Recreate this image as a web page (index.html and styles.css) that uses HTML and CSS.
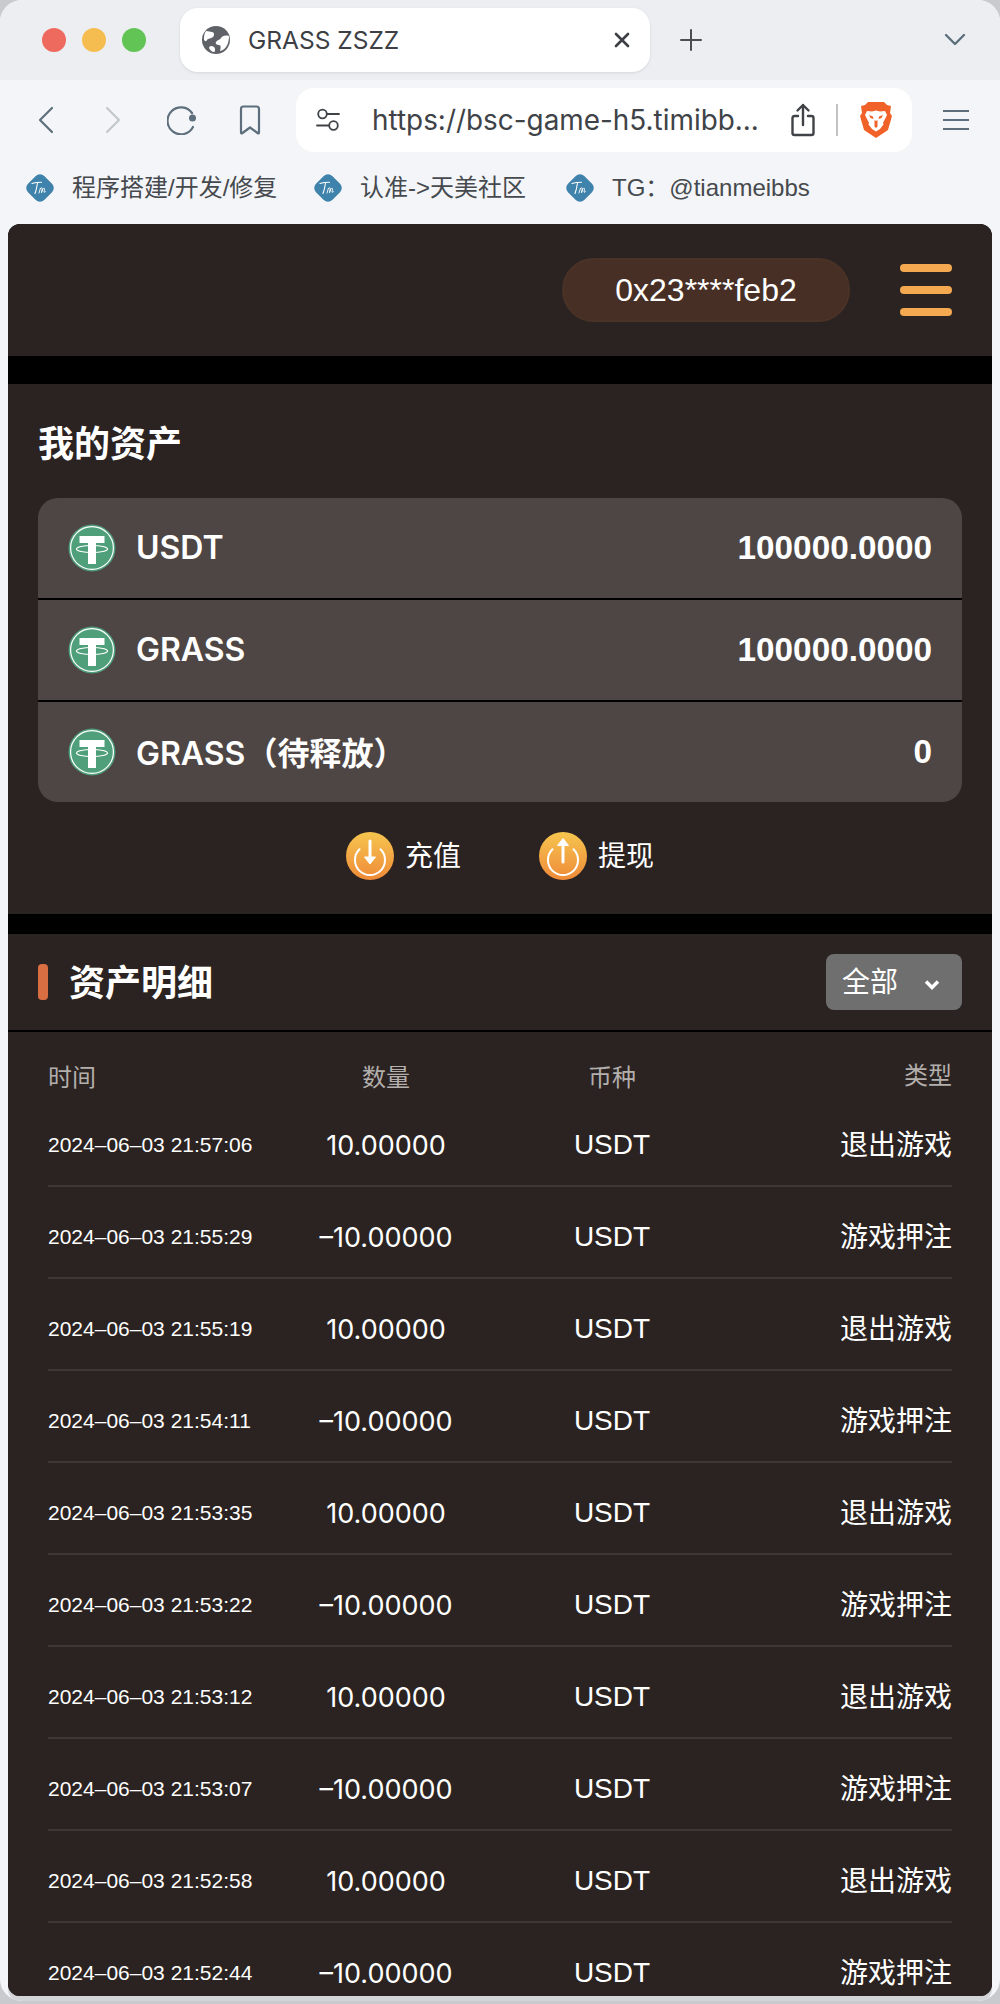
FILE: index.html
```html
<!DOCTYPE html>
<html lang="en">
<head>
    <meta charset="UTF-8">
    <meta name="viewport" content="width=device-width, initial-scale=1.0">
    <title>GRASS ZSZZ</title>
    <link rel="stylesheet" href="styles.css">
</head>
<body>

    <svg class="defs" width="0" height="0">
        <defs>
            <linearGradient id="coin" x1="0" y1="0" x2="0" y2="1">
                <stop offset="0" stop-color="#f6c54f"/>
                <stop offset="1" stop-color="#ef8a38"/>
            </linearGradient>
            <symbol id="tether" viewBox="0 0 48 48">
                <circle cx="24" cy="24" r="23.5" fill="#4f9f7b"/>
                <circle cx="24" cy="24" r="21.4" fill="none" stroke="#fff" stroke-width="1.2"/>
                <path d="M11.5 12h25v7H28v21h-8V19h-8.500z" fill="#fff"/>
                <ellipse cx="24" cy="25" rx="15.5" ry="3.5" fill="none" stroke="#fff" stroke-width="1.2"/>
            </symbol>
            <symbol id="tm" viewBox="0 0 30 30">
                <rect x="3.500" y="3.500" width="23" height="23" rx="6" fill="#3f82ab" transform="rotate(45 15 15)"/>
                <path d="M7 10.500c3-1 6-1.200 9.500-1.200M12.500 10c-.5 3.500-1.200 7-2.500 10.500" fill="none" stroke="#fff" stroke-width="1.1" stroke-linecap="round"/>
                <path d="M14 20l1.500-5 0 .5c1-1 2-1 1.800.3l-.8 4 1.300-3.800c1-1 2-1 1.800.3l-.6 2.700c.2.800 1 .3 1.600-.5" fill="none" stroke="#fff" stroke-width=".9" stroke-linecap="round"/>
            </symbol>
        </defs>
    </svg>

    <div class="window">
        <div class="tabstrip">
            <div class="lights">
                <span class="light red"></span>
                <span class="light yellow"></span>
                <span class="light green"></span>
            </div>
            <div class="tab">
                <svg class="globe" width="28" height="28" viewBox="0 0 28 28">
                    <circle cx="14" cy="14" r="14" fill="#5f6368"/>
                    <path d="M4 5c3 0 4 1 6 1s3 3 1 5-5 1-6 3-2 1-3 0c0-4 0-6 2-9zM27 10c-4-1-7 0-8 2s-4 2-5 4 1 3 3 3 2 3 1 6c5-1 9-6 9-15zM9 20c2 0 4 1 4 3s0 3-1 3c-2 0-4-2-5-4 0-1 1-2 2-2z" fill="#fff"/>
                </svg>
                <span class="tab-title">GRASS ZSZZ</span>
                <svg class="tab-close" width="16" height="16" viewBox="0 0 16 16">
                    <path d="M2 2l12 12M14 2L2 14" stroke="#3c4044" stroke-width="2.6" stroke-linecap="round"/>
                </svg>
            </div>
            <svg class="new-tab" width="22" height="22" viewBox="0 0 22 22">
                <path d="M11 1v20M1 11h20" stroke="#4a4e52" stroke-width="2" stroke-linecap="round"/>
            </svg>
            <svg class="tab-list" width="22" height="14" viewBox="0 0 22 14">
                <path d="M2 2l9 9 9-9" fill="none" stroke="#5d6f7c" stroke-width="2.4" stroke-linecap="round" stroke-linejoin="round"/>
            </svg>
        </div>

        <div class="toolbar">
            <div class="nav-icons">
                <svg class="nav-back" width="16" height="28" viewBox="0 0 16 28"><path d="M14 2L2 14l12 12" fill="none" stroke="#5d6f7c" stroke-width="2.2" stroke-linecap="round" stroke-linejoin="round"/></svg>
                <svg class="nav-forward" width="16" height="28" viewBox="0 0 16 28"><path d="M2 2l12 12L2 26" fill="none" stroke="#c2c8cc" stroke-width="2.2" stroke-linecap="round" stroke-linejoin="round"/></svg>
                <svg class="nav-reload" width="30" height="30" viewBox="0 0 30 30"><path d="M25 8A13.500 13.500 0 1 0 26 22" fill="none" stroke="#5d6f7c" stroke-width="2.2" stroke-linecap="round"/><circle cx="25.500" cy="13" r="3.500" fill="#5d6f7c"/></svg>
                <svg class="nav-mark" width="22" height="30" viewBox="0 0 22 30"><path d="M2 4q0-2.500 2.500-2.500h13Q20 1.500 20 4v23.500q0 1.500-1.500.5L11 22.500 3.500 28Q2 29 2 27.500z" fill="none" stroke="#5d6f7c" stroke-width="2.2" stroke-linejoin="round"/></svg>
            </div>
            <div class="address">
                <svg width="24" height="24" viewBox="0 0 24 24"><circle cx="6.500" cy="6" r="4.300" fill="none" stroke="#3f4347" stroke-width="1.8"/><path d="M11 6h12M1 17.500h12" stroke="#3f4347" stroke-width="1.8" stroke-linecap="round"/><circle cx="17.500" cy="17.500" r="4.300" fill="none" stroke="#3f4347" stroke-width="1.8"/></svg>
                <span class="url">https://bsc-game-h5.timibb...</span>
                <svg class="share" width="24" height="34" viewBox="0 0 24 34"><path d="M7 13H3.500Q1.500 13 1.500 15v15q0 2 2 2h17q2 0 2-2V15q0-2-2-2H17M12 22V2M6.500 7.500L12 2l5.500 5.500" fill="none" stroke="#3f4347" stroke-width="2.4" stroke-linecap="round" stroke-linejoin="round"/></svg>
                <span class="address-sep"></span>
                <svg class="brave" width="32" height="36" viewBox="0 0 32 36">
                    <path d="M8 0h16l3 3 4 1-1 7 2 3-4 14-9 6-3 2-3-2-9-6-4-14 2-3-1-7 4-1z" fill="#f0622a"/>
                    <path d="M7 9l5 .5 4-1 4 1 5-.5 2 4-4 8 .5 1.500L20 27l-4 2.500L12 27l-3.500-4.500L9 21l-4-8z" fill="#fff"/>
                    <path d="M14.500 18l1.500 1 1.500-1v6.500L16 26l-1.500-1.500zM9 13l4 1.500.5 2.500-3-1zM23 13l-4 1.500-.5 2.500 3-1z" fill="#f0622a"/>
                </svg>
            </div>
            <svg class="browser-menu" width="26" height="22" viewBox="0 0 26 22"><path d="M0 2h26M0 11h26M0 20h26" stroke="#5d6f7c" stroke-width="2"/></svg>
        </div>

        <div class="bookmarks">
            <div class="bookmark bm-first"><svg width="30" height="30"><use href="#tm"/></svg><span>程序搭建/开发/修复</span></div>
            <div class="bookmark bm-second"><svg width="30" height="30"><use href="#tm"/></svg><span>认准-&gt;天美社区</span></div>
            <div class="bookmark"><svg width="30" height="30"><use href="#tm"/></svg><span>TG：@tianmeibbs</span></div>
        </div>

        <div class="page">
            <div class="topbar">
                <div class="wallet">0x23****feb2</div>
                <div class="menu-btn"><i></i><i></i><i></i></div>
            </div>

            <div class="assets">
                <h2 class="assets-title">我的资产</h2>
                <div class="asset-card">
                    <div class="asset-row">
                        <svg class="coin" width="48" height="48"><use href="#tether"/></svg>
                        <span class="asset-name">USDT</span>
                        <span class="asset-value">100000.0000</span>
                    </div>
                    <div class="asset-row">
                        <svg class="coin" width="48" height="48"><use href="#tether"/></svg>
                        <span class="asset-name">GRASS</span>
                        <span class="asset-value">100000.0000</span>
                    </div>
                    <div class="asset-row">
                        <svg class="coin" width="48" height="48"><use href="#tether"/></svg>
                        <span class="asset-name">GRASS（待释放）</span>
                        <span class="asset-value">0</span>
                    </div>
                </div>
                <div class="asset-actions">
                    <div class="action">
                        <svg width="48" height="48" viewBox="0 0 48 48">
                            <circle cx="24" cy="24" r="24" fill="url(#coin)"/>
                            <path d="M13.500 17.300a15 15 0 1 0 21 0" fill="none" stroke="#fff" stroke-width="2" stroke-linecap="round"/>
                            <path d="M24 9v17" stroke="#fff" stroke-width="3" stroke-linecap="round"/>
                            <path d="M18.500 25h11L24 32z" fill="#fff" stroke="#fff" stroke-linejoin="round"/>
                        </svg>
                        <span>充值</span>
                    </div>
                    <div class="action">
                        <svg width="48" height="48" viewBox="0 0 48 48">
                            <circle cx="24" cy="24" r="24" fill="url(#coin)"/>
                            <path d="M13.500 17.300a15 15 0 1 0 21 0" fill="none" stroke="#fff" stroke-width="2" stroke-linecap="round"/>
                            <path d="M24 12v18" stroke="#fff" stroke-width="3" stroke-linecap="round"/>
                            <path d="M18.500 13.500h11L24 6.500z" fill="#fff" stroke="#fff" stroke-linejoin="round"/>
                        </svg>
                        <span>提现</span>
                    </div>
                </div>
            </div>

            <div class="records">
                <div class="records-head">
                    <span class="accent"></span>
                    <h2 class="records-title">资产明细</h2>
                    <div class="filter">
                        <span>全部</span>
                        <svg width="16" height="12" viewBox="0 0 16 12"><path d="M2 2.500l6 6 6-6" fill="none" stroke="#fff" stroke-width="3.4"/></svg>
                    </div>
                </div>
                <div class="table" id="table">
                    <div class="row row-head">
                        <span class="col-time">时间</span>
                        <span class="col-amount">数量</span>
                        <span class="col-coin">币种</span>
                        <span class="col-type">类型</span>
                    </div>
                </div>
            </div>
        </div>
    </div>

    <script>
        // Asset detail records
        const records = [
            ['2024–06–03 21:57:06', '10.00000', '退出游戏'],
            ['2024–06–03 21:55:29', '–10.00000', '游戏押注'],
            ['2024–06–03 21:55:19', '10.00000', '退出游戏'],
            ['2024–06–03 21:54:11', '–10.00000', '游戏押注'],
            ['2024–06–03 21:53:35', '10.00000', '退出游戏'],
            ['2024–06–03 21:53:22', '–10.00000', '游戏押注'],
            ['2024–06–03 21:53:12', '10.00000', '退出游戏'],
            ['2024–06–03 21:53:07', '–10.00000', '游戏押注'],
            ['2024–06–03 21:52:58', '10.00000', '退出游戏'],
            ['2024–06–03 21:52:44', '–10.00000', '游戏押注']
        ];

        const table = document.getElementById('table');
        records.forEach(function (r) {
            const row = document.createElement('div');
            row.className = 'row';
            row.innerHTML = `<span class="col-time">${r[0]}</span>
                <span class="col-amount">${r[1]}</span>
                <span class="col-coin">USDT</span>
                <span class="col-type">${r[2]}</span>`;
            table.appendChild(row);
        });
    </script>

</body>
</html>
```

FILE: styles.css
```css
/* Browser window fills the whole shot */
body {
    margin: 0;
    height: 2004px;
    overflow: hidden;
    background-color: #c9cacd;
    font-family: "Liberation Sans", "Noto Sans CJK SC", sans-serif;
}

.defs {
    position: absolute;
}

.window {
    height: 2001px;
    background-color: #f3f5f8;
    border-radius: 22px;
    overflow: hidden;
    display: flex;
    flex-direction: column;
}

/* Tab strip */
.tabstrip {
    height: 80px;
    flex: none;
    background-color: #eceef2;
    display: flex;
    align-items: center;
    padding: 0 34px 0 42px;
    box-sizing: border-box;
}

.lights {
    display: flex;
    gap: 16px;
    width: 138px;
}

.light {
    width: 24px;
    height: 24px;
    border-radius: 50%;
}

.red { background-color: #ee6a5f; }
.yellow { background-color: #f5bd4f; }
.green { background-color: #61c454; }

.tab {
    width: 470px;
    height: 64px;
    background-color: #fff;
    border-radius: 18px;
    box-shadow: 0 1px 3px rgba(0, 0, 0, 0.1);
    display: flex;
    align-items: center;
    padding: 0 20px 0 22px;
    box-sizing: border-box;
}

.tab-title {
    margin-left: 18px;
    font-size: 24.5px;
    color: #3c4044;
    font-family: "Inter", sans-serif;
}

.tab-close {
    margin-left: auto;
}

.new-tab {
    margin-left: 30px;
}

.tab-list {
    margin-left: auto;
}

/* Toolbar with the address box */
.toolbar {
    height: 80px;
    flex: none;
    display: flex;
    align-items: center;
    box-sizing: border-box;
    padding-left: 38px;
}

.nav-icons {
    width: 258px;
    display: flex;
    align-items: center;
}

.nav-forward { margin-left: 51px; }
.nav-reload { margin-left: 46px; }
.nav-mark { margin-left: 42px; }

.address {
    width: 616px;
    height: 64px;
    background-color: #fff;
    border-radius: 18px;
    display: flex;
    align-items: center;
    padding: 0 20px;
    box-sizing: border-box;
}

.url {
    margin-left: 32px;
    font-size: 27.9px;
    color: #3f4347;
    font-family: "Inter", sans-serif;
    white-space: nowrap;
}

.share {
    margin-left: auto;
}

.address-sep {
    width: 2px;
    height: 32px;
    margin: 0 22px 0 21px;
    background-color: #c0c2c4;
}

.browser-menu {
    margin-left: 31px;
}

/* Bookmarks row */
.bookmarks {
    height: 64px;
    flex: none;
    display: flex;
    align-items: center;
    padding-left: 25px;
    padding-bottom: 8px;
    box-sizing: border-box;
    font-size: 24px;
    color: #46494d;
}

.bookmark {
    display: flex;
    align-items: center;
    gap: 17px;
}

.bookmark span {
    padding-bottom: 5px;
}

.bm-first { width: 288px; }
.bm-second { width: 252px; }

/* Page in the browser */
.page {
    flex: 1;
    min-height: 0;
    margin: 0 8px 5px;
    overflow: hidden;
    background-color: #000;
    color: #fff;
    border-radius: 12px;
    box-shadow: 0 5px 0 #d3d4d7;
}

.topbar {
    height: 132px;
    background-color: #2b2321;
    display: flex;
    align-items: center;
    justify-content: flex-end;
    padding-right: 40px;
}

.wallet {
    width: 288px;
    height: 64px;
    box-sizing: border-box;
    border: 2px solid #4a3226;
    border-radius: 32px;
    background-color: #472f25;
    display: flex;
    align-items: center;
    justify-content: center;
    font-size: 32px;
    margin-right: 50px;
}

.menu-btn {
    width: 52px;
    display: flex;
    flex-direction: column;
    gap: 14px;
}

.menu-btn i {
    height: 8px;
    border-radius: 4px;
    background-color: #f4a950;
}

/* My assets */
.assets {
    margin-top: 28px;
    height: 530px;
    background-color: #2b2321;
    padding: 0 30px;
    box-sizing: border-box;
    overflow: hidden;
}

.assets-title {
    margin: 0;
    height: 114px;
    box-sizing: border-box;
    display: flex;
    align-items: center;
    font-size: 36px;
    font-weight: 700;
}

.asset-card {
    background-color: #4e4644;
    border-radius: 20px;
    overflow: hidden;
}

.asset-row {
    height: 102px;
    display: flex;
    align-items: center;
    padding: 0 30px;
    border-bottom: 2px solid #000;
    box-sizing: border-box;
    font-size: 32px;
}

.asset-row:last-child {
    height: 100px;
    border-bottom: none;
}

.asset-name {
    margin-left: 20px;
    padding-bottom: 2px;
    font-family: "Inter", "Noto Sans CJK SC", sans-serif;
    font-weight: 600;
}

.asset-value {
    margin-left: auto;
    font-size: 33.3px;
    font-weight: 700;
}

.asset-actions {
    height: 108px;
    display: flex;
    align-items: center;
    justify-content: center;
    gap: 78px;
}

.action {
    display: flex;
    align-items: center;
    gap: 11px;
    font-size: 28px;
}

.action span {
    padding-bottom: 4px;
}

/* Asset details */
.records {
    margin-top: 20px;
    background-color: #2b2321;
}

.records-head {
    height: 98px;
    display: flex;
    align-items: center;
    padding: 0 30px;
    border-bottom: 2px solid #000;
    box-sizing: border-box;
}

.accent {
    width: 10px;
    height: 36px;
    border-radius: 4px;
    background-color: #d96e43;
}

.records-title {
    margin: 0 0 0 21px;
    padding-bottom: 5px;
    font-size: 36px;
    font-weight: 700;
}

.filter {
    margin-left: auto;
    width: 136px;
    height: 56px;
    box-sizing: border-box;
    padding: 0 22px 0 16px;
    border-radius: 8px;
    background-color: #6f6f6f;
    display: flex;
    align-items: center;
    justify-content: space-between;
    font-size: 28px;
}

.filter span {
    padding-bottom: 4px;
}

.filter svg {
    margin-top: 6px;
}

.table {
    padding: 0 40px;
}

.row {
    height: 92px;
    box-sizing: border-box;
    padding-top: 10px;
    display: grid;
    grid-template-columns: 224px 228px 224px 228px;
    align-items: center;
    border-bottom: 2px solid #3d3735;
    font-size: 28px;
}

.row-head {
    height: 63px;
    padding-top: 24px;
    border-bottom: none;
    font-size: 24px;
    color: #b3afad;
}

.row .col-time {
    white-space: nowrap;
}

.row:not(.row-head) .col-time {
    font-size: 21px;
}

.row:not(.row-head) .col-amount {
    font-family: "Inter", sans-serif;
    font-size: 27px;
}

.col-amount,
.col-coin {
    text-align: center;
}

.col-type {
    text-align: right;
    padding-bottom: 4px;
}
```
